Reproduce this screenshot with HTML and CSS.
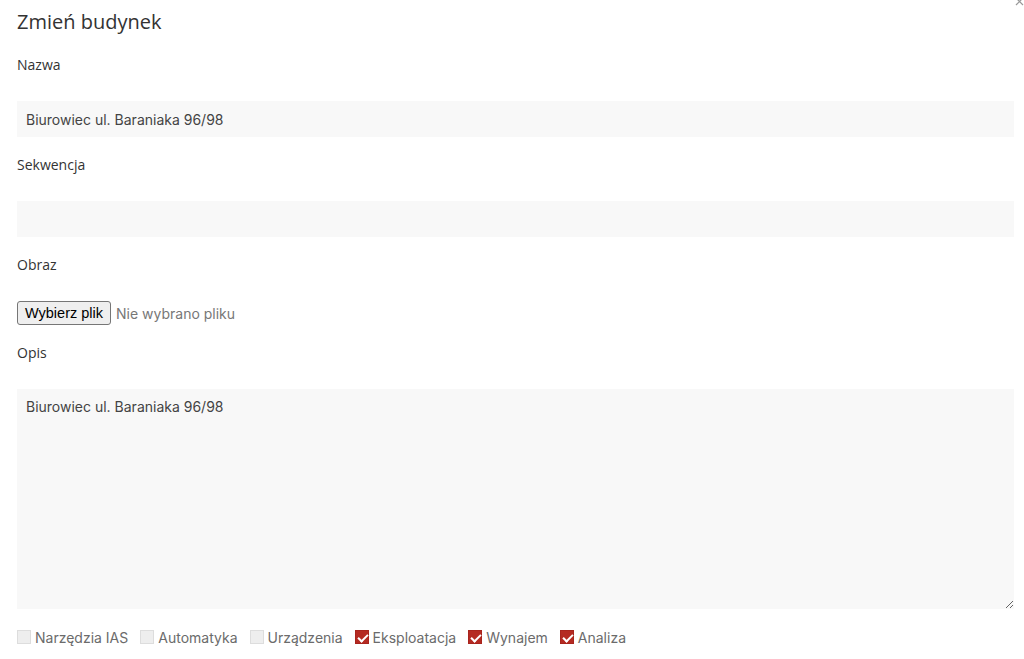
FILE: index.html
```html
<!DOCTYPE html>
<html lang="pl">
<head>
  <meta charset="utf-8">
  <title>Zmień budynek</title>
  <link rel="stylesheet" href="styles.css">
</head>
<body>
  <div class="modal">
    <svg class="close" width="9" height="9" viewBox="0 0 9 9">
      <path d="M1 1 L8 8 M8 1 L1 8" stroke="#999" stroke-width="1.2" fill="none"/>
    </svg>
    <h1>Zmień budynek</h1>

    <div class="group">
      <label>Nazwa</label>
      <input type="text" class="field" value="Biurowiec ul. Baraniaka 96/98">
    </div>

    <div class="group">
      <label>Sekwencja</label>
      <input type="text" class="field" value="">
    </div>

    <div class="group">
      <label>Obraz</label>
      <div class="file">
        <button class="file-btn">Wybierz plik</button>
        <span class="file-name">Nie wybrano pliku</span>
      </div>
    </div>

    <div class="group">
      <label>Opis</label>
      <textarea class="field area">Biurowiec ul. Baraniaka 96/98</textarea>
    </div>

    <div class="checks">
      <span class="check"><i class="box"></i>Narzędzia IAS</span>
      <span class="check"><i class="box"></i>Automatyka</span>
      <span class="check"><i class="box"></i>Urządzenia</span>
      <span class="check"><i class="box on"></i>Eksploatacja</span>
      <span class="check"><i class="box on"></i>Wynajem</span>
      <span class="check"><i class="box on"></i>Analiza</span>
    </div>
  </div>
</body>
</html>
```

FILE: styles.css
```css
* {
  box-sizing: border-box;
  margin: 0;
}

body {
  background: #fff;
  font-family: "Open Sans", "Liberation Sans", sans-serif;
  color: #333;
}

.modal {
  position: relative;
  padding: 8px 10px 0 17px;
}

.close {
  position: absolute;
  top: -3px;
  right: 0;
}

h1 {
  font-size: 20px;
  font-weight: 400;
  line-height: 28px;
  margin-bottom: 19px;
}

.group {
  margin-bottom: 18px;
}

.group label {
  display: block;
  font-size: 14px;
  line-height: 20px;
  margin-bottom: 26px;
}

.field {
  display: block;
  width: 100%;
  height: 36px;
  border: none;
  background: #f8f8f8;
  padding: 0 9px;
  font-family: Inter, "Liberation Sans", sans-serif;
  font-size: 14px;
  color: #444;
  outline: none;
}

.area {
  height: 220px;
  padding: 9px 9px;
  line-height: 17px;
  resize: vertical;
}

.file {
  display: flex;
  align-items: center;
  gap: 5px;
}

.file-btn {
  height: 24px;
  padding: 0 7px;
  border: 1px solid #767676;
  border-radius: 3px;
  background: #efefef;
  font-family: "Liberation Sans", Arial, sans-serif;
  font-size: 14.5px;
  color: #000;
}

.file-name {
  font-family: Inter, "Liberation Sans", sans-serif;
  font-size: 14px;
  color: #777;
}

.checks {
  display: flex;
  gap: 12px;
  height: 20px;
  align-items: center;
}

.check {
  display: flex;
  align-items: center;
  gap: 4px;
  font-family: Inter, "Liberation Sans", sans-serif;
  font-size: 14px;
  color: #6b6b6b;
}

.box {
  display: block;
  width: 14px;
  height: 14px;
  background: #eee;
  border: 1px solid #ddd;
  position: relative;
}

.box.on {
  background: #b52a22;
  border-color: #a8241d;
}

.box.on::after {
  content: "";
  position: absolute;
  left: 4px;
  top: 1px;
  width: 4px;
  height: 8px;
  border: solid #fff;
  border-width: 0 2px 2px 0;
  transform: rotate(45deg);
}
```
